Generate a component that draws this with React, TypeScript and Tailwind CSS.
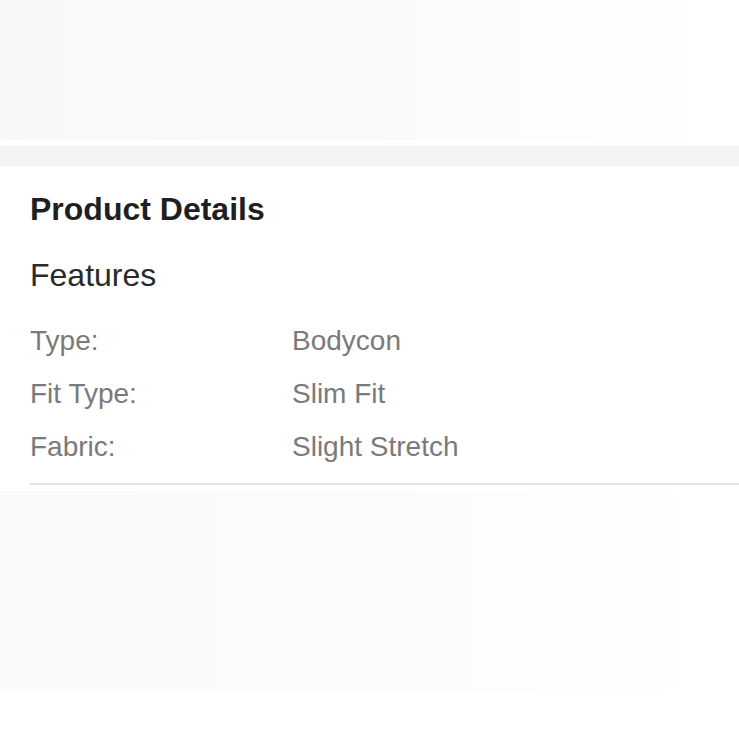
export default function App() {
  const rows = [
    { label: "Type:", value: "Bodycon" },
    { label: "Fit Type:", value: "Slim Fit" },
    { label: "Fabric:", value: "Slight Stretch" },
  ]

  return (
    <div className="w-[739px] h-[739px] overflow-hidden bg-white font-['Liberation_Sans',Arial,sans-serif]">
      {/* faded image area above */}
      <div className="h-[140px] bg-gradient-to-r from-[#f8f8f8] via-[#fafafa] to-white" />
      <div className="h-[6px] bg-white" />
      <div className="h-[20px] bg-[#f4f4f4]" />

      {/* Product details card */}
      <section className="bg-white pl-[30px] pt-[23px]">
        <h2 className="text-[32px] leading-[40px] font-bold text-[#1f1f1f]">
          Product Details
        </h2>
        <h3 className="mt-[26px] text-[32px] leading-[40px] text-[#2a2a2a]">
          Features
        </h3>
        <div className="mt-[19px]">
          {rows.map((row) => (
            <div key={row.label} className="flex text-[28px] leading-[53px] text-[#7a7a7a]">
              <span className="w-[262px]">{row.label}</span>
              <span>{row.value}</span>
            </div>
          ))}
        </div>
        <div className="mt-[10px] h-[2px] bg-[#e2e2e2]" />
      </section>

      {/* faded image area below */}
      <div className="mt-[6px] h-[200px] bg-gradient-to-r from-[#fafafa] via-[#fbfbfb] to-white" />
    </div>
  )
}
